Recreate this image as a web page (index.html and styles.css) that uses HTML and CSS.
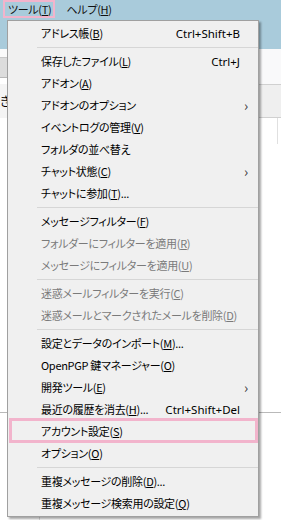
FILE: index.html
```html
<!DOCTYPE html>
<html lang="ja">
<head>
<meta charset="utf-8">
<link rel="stylesheet" href="styles.css">
</head>
<body>
<div class="app">
  <div class="titlebar">
    <div class="menubar">
      <span class="mb-item mb-open">ツール(<u>T</u>)</span>
      <span class="mb-item">ヘルプ(<u>H</u>)</span>
    </div>
  </div>
  <div class="workspace">
    <div class="left-pane">
      <div class="lp-top"></div>
      <div class="lp-band"></div>
      <div class="lp-cell">き</div>
      <div class="lp-fill"></div>
      <div class="lp-rule"></div>
      <div class="lp-fill2"></div>
    </div>
    <div class="right-pane">
      <div class="rp-toolbar"></div>
      <div class="rp-header"></div>
      <div class="rp-list">
        <div class="rp-row"><div class="rp-col"></div></div>
        <div class="rp-rule"></div>
      </div>
    </div>
  </div>

  <div class="menu">
    <div class="item"><span class="label">アドレス帳(<u>B</u>)</span><span class="key">Ctrl+Shift+B</span><span class="arrow"></span></div>
    <div class="sep"></div>
    <div class="item"><span class="label">保存したファイル(<u>L</u>)</span><span class="key">Ctrl+J</span><span class="arrow"></span></div>
    <div class="item"><span class="label">アドオン(<u>A</u>)</span><span class="key"></span><span class="arrow"></span></div>
    <div class="item"><span class="label">アドオンのオプション</span><span class="key"></span><span class="arrow">&#x203A;</span></div>
    <div class="item"><span class="label">イベントログの管理(<u>V</u>)</span><span class="key"></span><span class="arrow"></span></div>
    <div class="item"><span class="label">フォルダの並べ替え</span><span class="key"></span><span class="arrow"></span></div>
    <div class="item"><span class="label">チャット状態(<u>C</u>)</span><span class="key"></span><span class="arrow">&#x203A;</span></div>
    <div class="item"><span class="label">チャットに参加(<u>T</u>)...</span><span class="key"></span><span class="arrow"></span></div>
    <div class="sep"></div>
    <div class="item"><span class="label">メッセージフィルター(<u>F</u>)</span><span class="key"></span><span class="arrow"></span></div>
    <div class="item disabled"><span class="label">フォルダーにフィルターを適用(<u>R</u>)</span><span class="key"></span><span class="arrow"></span></div>
    <div class="item disabled"><span class="label">メッセージにフィルターを適用(<u>U</u>)</span><span class="key"></span><span class="arrow"></span></div>
    <div class="sep"></div>
    <div class="item disabled"><span class="label">迷惑メールフィルターを実行(<u>C</u>)</span><span class="key"></span><span class="arrow"></span></div>
    <div class="item disabled"><span class="label">迷惑メールとマークされたメールを削除(<u>D</u>)</span><span class="key"></span><span class="arrow"></span></div>
    <div class="sep"></div>
    <div class="item"><span class="label">設定とデータのインポート(<u>M</u>)...</span><span class="key"></span><span class="arrow"></span></div>
    <div class="item"><span class="label">OpenPGP 鍵マネージャー(<u>O</u>)</span><span class="key"></span><span class="arrow"></span></div>
    <div class="item"><span class="label">開発ツール(<u>E</u>)</span><span class="key"></span><span class="arrow">&#x203A;</span></div>
    <div class="item"><span class="label">最近の履歴を消去(<u>H</u>)...</span><span class="key">Ctrl+Shift+Del</span><span class="arrow"></span></div>
    <div class="item marked"><span class="label">アカウント設定(<u>S</u>)</span><span class="key"></span><span class="arrow"></span></div>
    <div class="item"><span class="label">オプション(<u>O</u>)</span><span class="key"></span><span class="arrow"></span></div>
    <div class="sep"></div>
    <div class="item"><span class="label">重複メッセージの削除(<u>D</u>)...</span><span class="key"></span><span class="arrow"></span></div>
    <div class="item"><span class="label">重複メッセージ検索用の設定(<u>Q</u>)</span><span class="key"></span><span class="arrow"></span></div>
  </div>
</div>
</body>
</html>
```

FILE: styles.css
```css
* { box-sizing: border-box; }
html, body { margin: 0; padding: 0; }
body {
  width: 281px;
  height: 520px;
  overflow: hidden;
  font-family: "Noto Sans CJK JP", "Noto Sans", sans-serif;
  font-feature-settings: "palt";
  font-size: 11px;
  letter-spacing: -0.3px;
  color: #000;
  background: #fff;
}
u { text-decoration: underline; text-underline-offset: 1px; }

.app { position: relative; width: 281px; height: 520px; }

.titlebar {
  height: 49px;
  background: #a9cbdb;
}
.menubar {
  display: flex;
  height: 18px;
  padding-left: 3px;
  align-items: stretch;
}
.mb-item {
  display: flex;
  align-items: center;
  padding: 0 6px;
  line-height: 1;
  color: #111;
}
.mb-open {
  border: 2px solid #f2b4cc;
  padding: 0 1px 0 3px;
  margin-right: 6px;
}

.workspace {
  display: flex;
  height: 471px;
}
.left-pane {
  width: 40px;
  display: flex;
  flex-direction: column;
  border-right: 1px solid #ddd;
}
.lp-top { height: 8px; background: #fafafa; }
.lp-band { height: 21px; background: #dcdcdc; border-top: 1px solid #c8c8c8; border-bottom: 1px solid #b8b8b8; }
.lp-cell { height: 34px; margin-top: 6px; padding: 8px 0 0 0; background: #f4f4f4; font-size: 12px; }
.lp-fill { height: 294px; }
.lp-rule { height: 1px; background: #b9b9b9; }
.lp-fill2 { flex: 1; }
.right-pane { flex: 1; display: flex; flex-direction: column; }
.rp-toolbar { height: 36px; background: #f9f9fa; border-bottom: 1px solid #d0d0d0; }
.rp-header { height: 33px; background: #efefef; border-bottom: 1px solid #d0d0d0; }
.rp-list { flex: 1; display: flex; flex-direction: column; }
.rp-row { height: 294px; display: flex; justify-content: flex-end; }
.rp-col { width: 4px; height: 26px; border-left: 1px solid #e0e0e0; }
.rp-rule { height: 1px; background: #b9b9b9; }

.menu {
  position: absolute;
  left: 7px;
  top: 20px;
  width: 252px;
  background: #f0f0f0;
  border: 1px solid #a0a0a0;
  padding: 1px 0 2px;
  box-shadow: 2px 2px 2px rgba(0,0,0,0.35);
}
.item {
  position: relative;
  display: flex;
  align-items: center;
  height: 22px;
  padding-left: 33px;
  white-space: nowrap;
}
.label { flex: 1; }
.key {
  font-family: "Noto Sans", sans-serif;
  font-size: 11.5px;
  letter-spacing: 0;
}
.arrow {
  width: 18px;
  padding-left: 4px;
  font-size: 14px;
  letter-spacing: 0;
  color: #333;
}
.disabled { color: #7a7a7a; }
.sep {
  height: 6px;
  margin-left: 29px;
  display: flex;
  align-items: center;
}
.sep::before {
  content: "";
  display: block;
  width: 100%;
  height: 1px;
  background: #d6d6d6;
}
.marked::after {
  content: "";
  position: absolute;
  left: 1px;
  right: 0;
  top: -2px;
  bottom: -1px;
  border: 3px solid #f2b4cc;
}
```
